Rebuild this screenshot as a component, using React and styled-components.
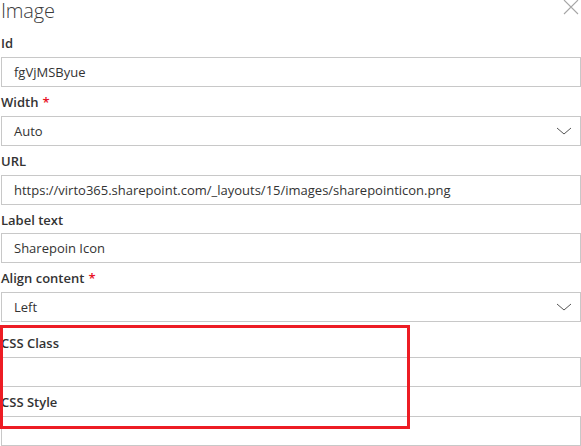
import React from "react";
import styled, { createGlobalStyle } from "styled-components";

const GlobalStyle = createGlobalStyle`
  html, body {
    margin: 0;
    padding: 0;
    background: #ffffff;
  }
  body {
    font-family: "Open Sans", "Noto Sans", "Liberation Sans", sans-serif;
    color: #333333;
  }
  * { box-sizing: border-box; }
`;

const Panel = styled.div`
  width: 581px;
  height: 446px;
  overflow: hidden;
  padding-left: 1px;
`;

const Header = styled.div`
  display: flex;
  justify-content: space-between;
  align-items: flex-start;
  height: 28.25px;
`;

const Title = styled.h1`
  margin: 0;
  font-size: 20px;
  font-weight: 300;
  line-height: 22px;
  color: #3c3c3c;
  letter-spacing: -0.2px;
`;

const CloseButton = styled.button`
  border: 0;
  background: none;
  padding: 0;
  margin: 0 2px 0 0;
  width: 16px;
  height: 15px;
  display: flex;
  cursor: pointer;
`;

const Form = styled.div`
  width: 580px;
`;

const Field = styled.div`
  display: flex;
  flex-direction: column;
`;

const Label = styled.label`
  display: block;
  height: 28.75px;
  padding-top: 5px;
  font-size: 13px;
  line-height: 20px;
  font-weight: 600;
  color: #333333;
  white-space: nowrap;
`;

const Required = styled.span`
  color: #e81123;
  margin-left: 4px;
`;

const Input = styled.div`
  height: 30px;
  width: 100%;
  border: 1px solid #c8c8c8;
  display: flex;
  align-items: center;
  padding: 0 12px;
  font-size: 13px;
  color: #333333;
  white-space: nowrap;
  overflow: hidden;
`;

const Select = styled(Input)`
  justify-content: space-between;
  padding-right: 8px;
`;

const StyleSection = styled.div`
  position: relative;
  margin-top: 6.25px;
`;

const Highlight = styled.div`
  position: absolute;
  left: -1px;
  top: -3.25px;
  width: 410px;
  height: 104px;
  border: 3px solid #ed1c24;
  pointer-events: none;
`;

const CloseIcon = () => (
  <svg width="16" height="15" viewBox="0 0 16 15">
    <path d="M1 0 L15 14 M15 0 L1 14" stroke="#a6a6a6" strokeWidth="1.1" fill="none" />
  </svg>
);

const Chevron = () => (
  <svg width="16" height="8" viewBox="0 0 16 8">
    <path d="M1 1 L8 7 L15 1" stroke="#555555" strokeWidth="1" fill="none" />
  </svg>
);

const TextField = ({ label, value, required }) => (
  <Field>
    <Label>
      {label}
      {required && <Required>*</Required>}
    </Label>
    <Input>{value}</Input>
  </Field>
);

const Dropdown = ({ label, value, required }) => (
  <Field>
    <Label>
      {label}
      {required && <Required>*</Required>}
    </Label>
    <Select>
      <span>{value}</span>
      <Chevron />
    </Select>
  </Field>
);

export default function App() {
  return (
    <>
      <GlobalStyle />
      <Panel>
        <Header>
          <Title>Image</Title>
          <CloseButton aria-label="Close">
            <CloseIcon />
          </CloseButton>
        </Header>
        <Form>
          <TextField label="Id" value="fgVjMSByue" />
          <Dropdown label="Width" value="Auto" required />
          <TextField
            label="URL"
            value="https://virto365.sharepoint.com/_layouts/15/images/sharepointicon.png"
          />
          <TextField label="Label text" value="Sharepoin Icon" />
          <Dropdown label="Align content" value="Left" required />
          <StyleSection>
            <TextField label="CSS Class" value="" />
            <TextField label="CSS Style" value="" />
            <Highlight />
          </StyleSection>
        </Form>
      </Panel>
    </>
  );
}
